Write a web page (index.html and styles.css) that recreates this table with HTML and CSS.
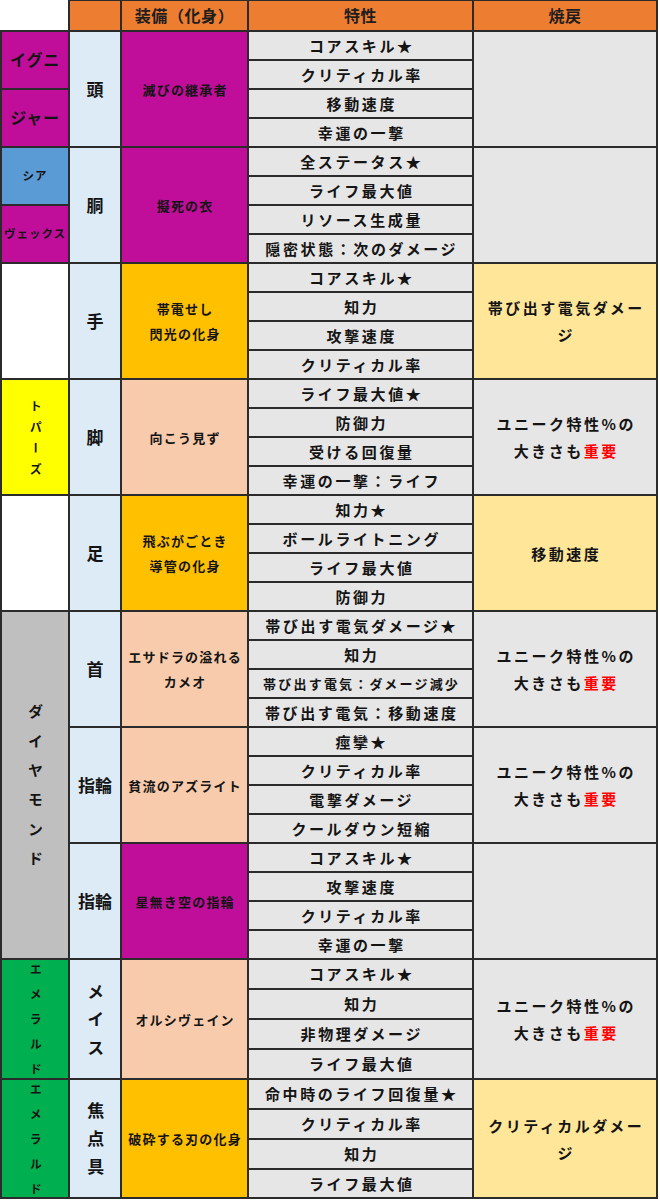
FILE: index.html
```html
<!DOCTYPE html>
<html lang="ja">
<head>
<meta charset="utf-8">
<title>装備表</title>
<link rel="stylesheet" href="styles.css">
</head>
<body>
<div class="sheet">
  <div class="c corner"></div>
  <div class="c hd"></div>
  <div class="c hd">装備（化身）</div>
  <div class="c hd">特性</div>
  <div class="c hd">焼戻</div>

  <!-- 頭 -->
  <div class="c k1 mg s2 name">イグニ</div>
  <div class="c k2 lb s4">頭</div>
  <div class="c k3 mg s4"><span>滅びの継承者</span></div>
  <div class="c tr">コアスキル★</div>
  <div class="c k5 gy s4"></div>
  <div class="c tr">クリティカル率</div>
  <div class="c k1 mg s2 name">ジャー</div>
  <div class="c tr">移動速度</div>
  <div class="c tr">幸運の一撃</div>

  <!-- 胴 -->
  <div class="c k1 bl s2 small">シア</div>
  <div class="c k2 lb s4">胴</div>
  <div class="c k3 mg s4"><span>擬死の衣</span></div>
  <div class="c tr">全ステータス★</div>
  <div class="c k5 gy s4"></div>
  <div class="c tr">ライフ最大値</div>
  <div class="c k1 mg s2 small">ヴェックス</div>
  <div class="c tr">リソース生成量</div>
  <div class="c tr">隠密状態：次のダメージ</div>

  <!-- 手 -->
  <div class="c k1 wh s4"></div>
  <div class="c k2 lb s4">手</div>
  <div class="c k3 gd s4"><span>帯電せし<br>閃光の化身</span></div>
  <div class="c tr">コアスキル★</div>
  <div class="c k5 ly s4"><span>帯び出す電気ダメー<br>ジ</span></div>
  <div class="c tr">知力</div>
  <div class="c tr">攻撃速度</div>
  <div class="c tr">クリティカル率</div>

  <!-- 脚 -->
  <div class="c k1 ye s4"><span class="v topaz">トパーズ</span></div>
  <div class="c k2 lb s4">脚</div>
  <div class="c k3 pc s4"><span>向こう見ず</span></div>
  <div class="c tr">ライフ最大値★</div>
  <div class="c k5 gy s4"><span>ユニーク特性%の<br>大きさも<em class="red">重要</em></span></div>
  <div class="c tr">防御力</div>
  <div class="c tr">受ける回復量</div>
  <div class="c tr">幸運の一撃：ライフ</div>

  <!-- 足 -->
  <div class="c k1 wh s4"></div>
  <div class="c k2 lb s4">足</div>
  <div class="c k3 gd s4"><span>飛ぶがごとき<br>導管の化身</span></div>
  <div class="c tr">知力★</div>
  <div class="c k5 ly s4"><span>移動速度</span></div>
  <div class="c tr">ボールライトニング</div>
  <div class="c tr">ライフ最大値</div>
  <div class="c tr">防御力</div>

  <!-- 首 -->
  <div class="c k1 gr s12"><span class="v diamond">ダイヤモンド</span></div>
  <div class="c k2 lb s4">首</div>
  <div class="c k3 pc s4"><span>エサドラの溢れる<br>カメオ</span></div>
  <div class="c tr">帯び出す電気ダメージ★</div>
  <div class="c k5 gy s4"><span>ユニーク特性%の<br>大きさも<em class="red">重要</em></span></div>
  <div class="c tr">知力</div>
  <div class="c tr tiny">帯び出す電気：ダメージ減少</div>
  <div class="c tr">帯び出す電気：移動速度</div>

  <!-- 指輪 1 -->
  <div class="c k2 lb s4">指輪</div>
  <div class="c k3 pc s4"><span>貧流のアズライト</span></div>
  <div class="c tr">痙攣★</div>
  <div class="c k5 gy s4"><span>ユニーク特性%の<br>大きさも<em class="red">重要</em></span></div>
  <div class="c tr">クリティカル率</div>
  <div class="c tr">電撃ダメージ</div>
  <div class="c tr">クールダウン短縮</div>

  <!-- 指輪 2 -->
  <div class="c k2 lb s4">指輪</div>
  <div class="c k3 mg s4"><span>星無き空の指輪</span></div>
  <div class="c tr">コアスキル★</div>
  <div class="c k5 gy s4"></div>
  <div class="c tr">攻撃速度</div>
  <div class="c tr">クリティカル率</div>
  <div class="c tr">幸運の一撃</div>

  <!-- メイス -->
  <div class="c k1 em s4"><span class="v emerald">エメラルド</span></div>
  <div class="c k2 lb s4"><span class="v weapon">メイス</span></div>
  <div class="c k3 pc s4"><span>オルシヴェイン</span></div>
  <div class="c tr">コアスキル★</div>
  <div class="c k5 gy s4"><span>ユニーク特性%の<br>大きさも<em class="red">重要</em></span></div>
  <div class="c tr">知力</div>
  <div class="c tr">非物理ダメージ</div>
  <div class="c tr">ライフ最大値</div>

  <!-- 焦点具 -->
  <div class="c k1 em s4"><span class="v emerald">エメラルド</span></div>
  <div class="c k2 lb s4"><span class="v weapon">焦点具</span></div>
  <div class="c k3 gd s4"><span>破砕する刃の化身</span></div>
  <div class="c tr">命中時のライフ回復量★</div>
  <div class="c k5 ly s4"><span>クリティカルダメー<br>ジ</span></div>
  <div class="c tr">クリティカル率</div>
  <div class="c tr">知力</div>
  <div class="c tr">ライフ最大値</div>
</div>
</body>
</html>
```

FILE: styles.css
```css
body {
  margin: 0;
  background: #ffffff;
  font-family: "Noto Sans CJK JP", "Noto Sans", sans-serif;
  font-weight: 700;
  color: #141414;
}

.sheet {
  display: grid;
  grid-template-columns: 70px 52px 127px 225px 184px;
  grid-template-rows: 32px repeat(32, 29px) repeat(7, 30px) 29px;
}

.c {
  box-sizing: border-box;
  border-right: 2px solid #2b2b2b;
  border-bottom: 2px solid #2b2b2b;
  display: flex;
  align-items: center;
  justify-content: center;
  text-align: center;
  overflow: hidden;
  line-height: 1.2;
}

.corner {
  background: #ffffff;
}

.hd {
  background: #ed7d31;
  border-top: 1px solid #2b2b2b;
  font-size: 16px;
  letter-spacing: 0.6px;
  color: #1e1e1e;
}

.s2 { grid-row: span 2; }
.s4 { grid-row: span 4; }
.s12 { grid-row: span 12; }

.k1 {
  border-left: 2px solid #2b2b2b;
}

.k2 {
  font-size: 17px;
}

.k3 {
  font-size: 13px;
  letter-spacing: 1.2px;
  padding-left: 1.2px;
  line-height: 25px;
}

.k5 {
  font-size: 15px;
  letter-spacing: 2.5px;
  padding-left: 2.5px;
  line-height: 27px;
}

.tr {
  background: #e7e6e6;
  font-size: 15px;
  letter-spacing: 2.6px;
  padding-left: 2.6px;
  white-space: nowrap;
}

.tr.tiny {
  font-size: 13px;
  letter-spacing: 2.2px;
  padding-left: 2.2px;
}

.name {
  font-size: 16px;
  letter-spacing: 0.8px;
}

.small {
  font-size: 11.5px;
  letter-spacing: 1px;
}

.v {
  writing-mode: vertical-rl;
  text-orientation: upright;
  white-space: nowrap;
  flex: none;
}

.topaz {
  font-size: 12px;
  letter-spacing: 9px;
  padding-top: 9px;
}

.diamond {
  font-size: 15px;
  letter-spacing: 14.4px;
  padding-top: 14.4px;
}

.emerald {
  font-size: 12px;
  letter-spacing: 13px;
  padding-top: 13px;
}

.weapon {
  font-size: 17px;
  letter-spacing: 11px;
  padding-top: 11px;
}

.red {
  color: #ff0000;
  font-style: normal;
}

.mg { background: #c00e9a; }
.lb { background: #ddebf7; }
.bl { background: #5b9bd5; }
.gd { background: #ffc000; }
.pc { background: #f8cbad; }
.ye { background: #ffff00; }
.gr { background: #bfbfbf; }
.em { background: #00b050; }
.gy { background: #e7e6e6; }
.ly { background: #ffe699; }
.wh { background: #ffffff; }
```
